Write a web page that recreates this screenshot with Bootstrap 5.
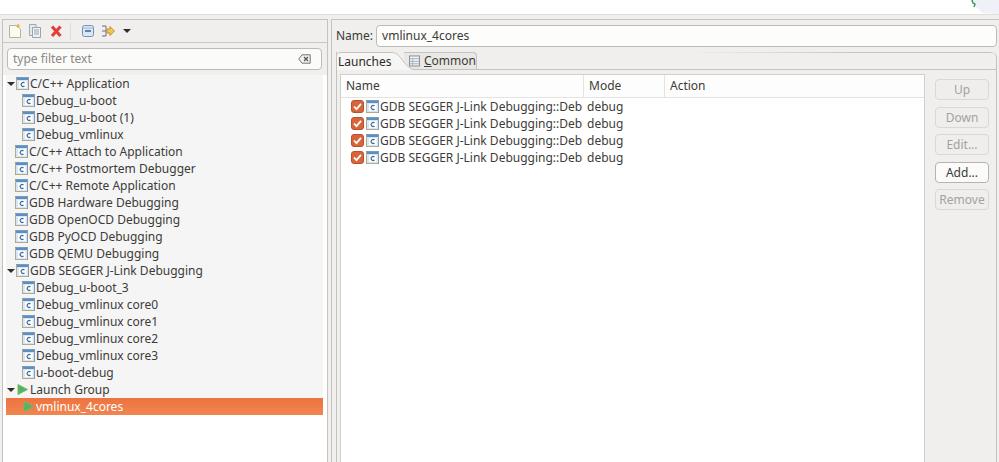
<!DOCTYPE html>
<html lang="en">
<head>
    <title>Debug Configurations</title>
    <link href="https://cdn.jsdelivr.net/npm/bootstrap@5.3.3/dist/css/bootstrap.min.css" rel="stylesheet">
    <style>
        html, body { height: 462px; overflow: hidden; background: #fff; }
        body { font-family: "Noto Sans", "Open Sans", sans-serif; font-size: 12px; color: #3c3b37; }
        .top-strip { height: 14px; }
        .top-strip svg { position: absolute; left: 960px; top: 0; }
        .main-area { height: 448px; background: #f0efed; border-top: 1px solid #dfdedb; padding: 4px 0 0 2px; gap: 3px; }
        .left-pane { width: 326px; flex: none; background: #fff; border: 1px solid #c4c3bf; border-bottom: 0; }
        .tool-row { height: 23px; background: #f0efed; border-bottom: 1px solid #c9c8c4; padding-left: 6px; gap: 8px; }
        .tool-row .sep { width: 1px; height: 17px; background: #dddcd9; margin-right: 3px; }
        .filter-wrap { background: #f0efed; padding: 5px 5px 5px 4px; }
        .filter-box { height: 22px; background: #fbfbfa; border: 1px solid #bcbbb7; border-radius: 4px; padding: 0 10px 0 5px; color: #8a8986; }
        .tree-list { margin: 0 4px 0 3px; background: #f5f5f5; }
        .tree-row { height: 17px; white-space: nowrap; line-height: 17px; }
        .tree-top { padding-left: 1px; }
        .tree-kid { padding-left: 16px; }
        .tree-arrow { width: 8px; flex: none; }
        .tree-row svg { flex: none; margin-right: 1px; }
        .tree-sel { background: linear-gradient(#ee7340, #f08550); color: #fff; }
        .right-pane { flex: 1; border-left: 1px solid #c4c3bf; border-top: 1px solid #c4c3bf; padding: 5px 2px 0 4px; min-width: 0; }
        .name-row { height: 22px; gap: 3px; margin-bottom: 5px; }
        .name-input { flex: 1; height: 22px; background: #fdfdfc; border: 1px solid #bcbbb7; border-radius: 4px; padding-left: 5px; line-height: 20px; }
        .tab-folder { border-left: 1px solid #c4c3bf; border-right: 1px solid #c4c3bf; border-top-right-radius: 6px; }
        .tab-row { height: 18px; border-bottom: 1px solid #c4c3bf; }
        .tab-on { height: 18px; width: 56px; flex: none; background: #f7f6f5; border-top: 1px solid #c4c3bf; border-top-left-radius: 4px; padding-left: 1px; color: #2c2b28; }
        .tab-slant { width: 20px; height: 18px; flex: none; position: relative; z-index: 1; }
        .tab-off { height: 17px; width: 73px; flex: none; margin-left: -9px; background: #e9e8e5; border-top: 1px solid #c4c3bf; border-right: 1px solid #c4c3bf; border-radius: 0 4px 0 0; padding-left: 5px; gap: 4px; }
        .tab-off svg, .tab-off span { position: relative; z-index: 2; }
        .tab-off u { text-decoration-thickness: 1px; }
        .tab-rest { flex: 1; background: linear-gradient(90deg, transparent 40%, #c4c3bf 75%) top / 100% 1px no-repeat; border-top-right-radius: 6px; }
        .tab-body { gap: 10px; padding: 4px 0 0 3px; height: 395px; }
        .launch-table { width: 585px; flex: none; background: #fff; border: 1px solid #d0cfcb; border-bottom: 0; }
        .launch-head { height: 23px; border-bottom: 1px solid #e4e3e0; background: #fdfdfd; }
        .launch-head > div { height: 22px; line-height: 22px; border-right: 1px solid #e4e3e0; padding-left: 5px; }
        .col-name { width: 243px; flex: none; }
        .col-mode { width: 81px; flex: none; }
        .launch-row { height: 17px; line-height: 17px; white-space: nowrap; }
        .cell-name { width: 242px; flex: none; overflow: hidden; padding-left: 10px; }
        .cell-mode { padding-left: 4px; }
        .launch-row svg { flex: none; }
        .launch-row svg + svg { margin: 0 1px 0 2px; }
        .side-btns { width: 54px; flex: none; gap: 6.5px; padding-top: 5px; }
        .side-btn { height: 21px; padding: 1px 0 0; font-size: 12px; line-height: 18px; color: #a3a29e; background: #efeeec; border: 1px solid #d9d8d5; border-radius: 4px; }
        .side-btn:disabled { color: #a3a29e; background: #efeeec; border-color: #d9d8d5; opacity: 1; }
        .side-btn.live { color: #3c3b37; background: #fbfbfa; border-color: #b5b4b0; }
    </style>
</head>
<body>

<!-- icon defs -->
<svg width="0" height="0" class="position-absolute">
    <symbol id="ic-c" viewBox="0 0 13 13">
        <rect x=".5" y=".5" width="12" height="12" fill="#d8e6f3" stroke="#7d9cba"/>
        <path d="M.5 1V12.5H12" fill="none" stroke="#b5a98c"/>
        <rect x="1" y="1" width="11" height="2" fill="#5a8fc4"/>
        <rect x="3" y="4" width="7.5" height="7" fill="#fff"/>
        <path d="M8.5 6a2 2 0 1 0 0 3" fill="none" stroke="#3f6d9c" stroke-width="1.3"/>
    </symbol>
    <symbol id="ic-play" viewBox="0 0 13 13">
        <path d="M2 1.5 11.5 6.5 2 11.5Z" fill="#58b25c" stroke="#6fbb72"/>
    </symbol>
    <symbol id="ic-arrow" viewBox="0 0 8 6">
        <path d="M0 1H8L4 5Z" fill="#2f2e2b"/>
    </symbol>
    <symbol id="ic-check" viewBox="0 0 13 13">
        <rect x=".5" y=".5" width="12" height="12" rx="2.5" fill="#d9643a" stroke="#b8502b"/>
        <path d="M3 6.5 5.5 9.2 10 3.8" fill="none" stroke="#fff" stroke-width="1.8"/>
    </symbol>
</svg>

<div class="top-strip">
    <svg width="39" height="14" viewBox="0 0 39 14"><path d="M10 0 39 0 39 14 22 13Z" fill="#eef1f7"/><path d="M12 0 13 3 15 4 14 7" fill="none" stroke="#2f8a4c" stroke-width="1.3"/></svg>
</div>

<div class="main-area d-flex">
    <!-- Left: configuration tree -->
    <div class="left-pane d-flex flex-column">
        <div class="tool-row d-flex align-items-center">
            <svg width="12" height="16" viewBox="0 0 12 16"><path d="M.5 2.5H7.5L11.5 6V14.5H.5Z" fill="#fdfbee" stroke="#b8b49c"/><path d="M9 1V5M7 3H11" stroke="#e0b040" stroke-width="1.2"/></svg>
            <svg width="12" height="16" viewBox="0 0 12 16"><path d="M.5 1.5H7V12.5H.5Z" fill="#e4e9ef" stroke="#a0a8b2"/><path d="M3.5 4.5H11.5V14.5H3.5Z" fill="#f2f2ec" stroke="#98a4b0"/><path d="M5 7H10M5 9H10M5 11H10" stroke="#8fa5bc"/></svg>
            <svg width="13" height="16" viewBox="0 0 13 16"><path d="M3 3.5 11.5 13M11.5 3.5 3 13" stroke="#e0403c" stroke-width="3.2"/></svg>
            <span class="sep"></span>
            <svg width="12" height="16" viewBox="0 0 12 16"><rect x=".5" y="2.5" width="11" height="11" rx="2" fill="#dbe6f1" stroke="#6f94bb"/><path d="M3 8H9" stroke="#3f6d9c" stroke-width="1.6"/><path d="M1 5H11" stroke="#9db8d4"/></svg>
            <svg width="13" height="16" viewBox="0 0 13 16"><path d="M0 3H4M0 8H4M0 13H4M4 3V13" stroke="#6a6f76"/><path d="M5 6H8V3.5L12.5 8 8 12.5V10H5Z" fill="#f2c65a" stroke="#c28f2c"/></svg>
            <svg width="8" height="6" viewBox="0 0 8 6"><use href="#ic-arrow"/></svg>
        </div>
        <div class="filter-wrap">
            <div class="filter-box d-flex align-items-center justify-content-between">
                <span>type filter text</span>
                <svg width="13" height="10" viewBox="0 0 13 10"><path d="M4 .8H12.2V9.2H4L.8 5Z" fill="#f2f2f0" stroke="#75746f"/><path d="M6 3 10 7M10 3 6 7" stroke="#55544f" stroke-width="1.2"/></svg>
            </div>
        </div>
        <div class="tree-list" id="tree"></div>
    </div>

    <!-- Right: launch group editor -->
    <div class="right-pane">
        <div class="name-row d-flex align-items-center">
            <span>Name:</span>
            <div class="name-input">vmlinux_4cores</div>
        </div>
        <div class="tab-folder">
            <div class="tab-row d-flex">
                <div class="tab-on">Launches</div>
                <svg class="tab-slant" viewBox="0 0 20 18"><path d="M0 0C8 1 11 15 20 17V18H0Z" fill="#f7f6f5"/><path d="M0 .5C8 1 11 15 20 17.5" fill="none" stroke="#c4c3bf"/></svg>
                <div class="tab-off d-flex align-items-center">
                    <svg width="12" height="12" viewBox="0 0 12 12"><rect x=".5" y=".5" width="11" height="11" fill="#eef0f3" stroke="#7f8a96"/><path d="M1 3.5H11M1 6.5H11M1 9H11M4 3V11" stroke="#a6afb9"/></svg>
                    <span><u>C</u>ommon</span>
                </div>
                <div class="tab-rest"></div>
            </div>
            <div class="tab-body d-flex">
                <div class="launch-table">
                    <div class="launch-head d-flex">
                        <div class="col-name">Name</div>
                        <div class="col-mode">Mode</div>
                        <div class="flex-grow-1 border-0">Action</div>
                    </div>
                    <div id="launches"></div>
                </div>
                <div class="side-btns d-flex flex-column">
                    <button class="btn side-btn" disabled>Up</button>
                    <button class="btn side-btn" disabled>Down</button>
                    <button class="btn side-btn" disabled>Edit...</button>
                    <button class="btn side-btn live">Add...</button>
                    <button class="btn side-btn" disabled>Remove</button>
                </div>
            </div>
        </div>
    </div>
</div>

<script src="https://cdn.jsdelivr.net/npm/bootstrap@5.3.3/dist/js/bootstrap.bundle.min.js"></script>
<script>
    // [label, level, open arrow, icon, selected]
    const treeData = [
        ['C/C++ Application', 0, true],
        ['Debug_u-boot', 1],
        ['Debug_u-boot (1)', 1],
        ['Debug_vmlinux', 1],
        ['C/C++ Attach to Application', 0],
        ['C/C++ Postmortem Debugger', 0],
        ['C/C++ Remote Application', 0],
        ['GDB Hardware Debugging', 0],
        ['GDB OpenOCD Debugging', 0],
        ['GDB PyOCD Debugging', 0],
        ['GDB QEMU Debugging', 0],
        ['GDB SEGGER J-Link Debugging', 0, true],
        ['Debug_u-boot_3', 1],
        ['Debug_vmlinux core0', 1],
        ['Debug_vmlinux core1', 1],
        ['Debug_vmlinux core2', 1],
        ['Debug_vmlinux core3', 1],
        ['u-boot-debug', 1],
        ['Launch Group', 0, true, 'ic-play'],
        ['vmlinux_4cores', 1, false, 'ic-play', true]
    ];

    document.getElementById('tree').innerHTML = treeData.map(([label, level, open, icon, sel]) => {
        const arrow = open ? '<svg class="tree-arrow" width="8" height="6" viewBox="0 0 8 6"><use href="#ic-arrow"/></svg>' : '<span class="tree-arrow"></span>';
        return `<div class="tree-row d-flex align-items-center ${level ? 'tree-kid' : 'tree-top'} ${sel ? 'tree-sel' : ''}">
            ${level ? '' : arrow}
            <svg width="13" height="13"><use href="#${icon || 'ic-c'}"/></svg>
            <span>${label}</span></div>`;
    }).join('');

    document.getElementById('launches').innerHTML = Array(4).fill(0).map(() =>
        `<div class="launch-row d-flex align-items-center">
            <div class="cell-name d-flex align-items-center">
                <svg width="13" height="13"><use href="#ic-check"/></svg>
                <svg width="13" height="13"><use href="#ic-c"/></svg>
                <span>GDB SEGGER J-Link Debugging::Debu</span>
            </div>
            <div class="cell-mode">debug</div>
        </div>`).join('');
</script>
</body>
</html>
